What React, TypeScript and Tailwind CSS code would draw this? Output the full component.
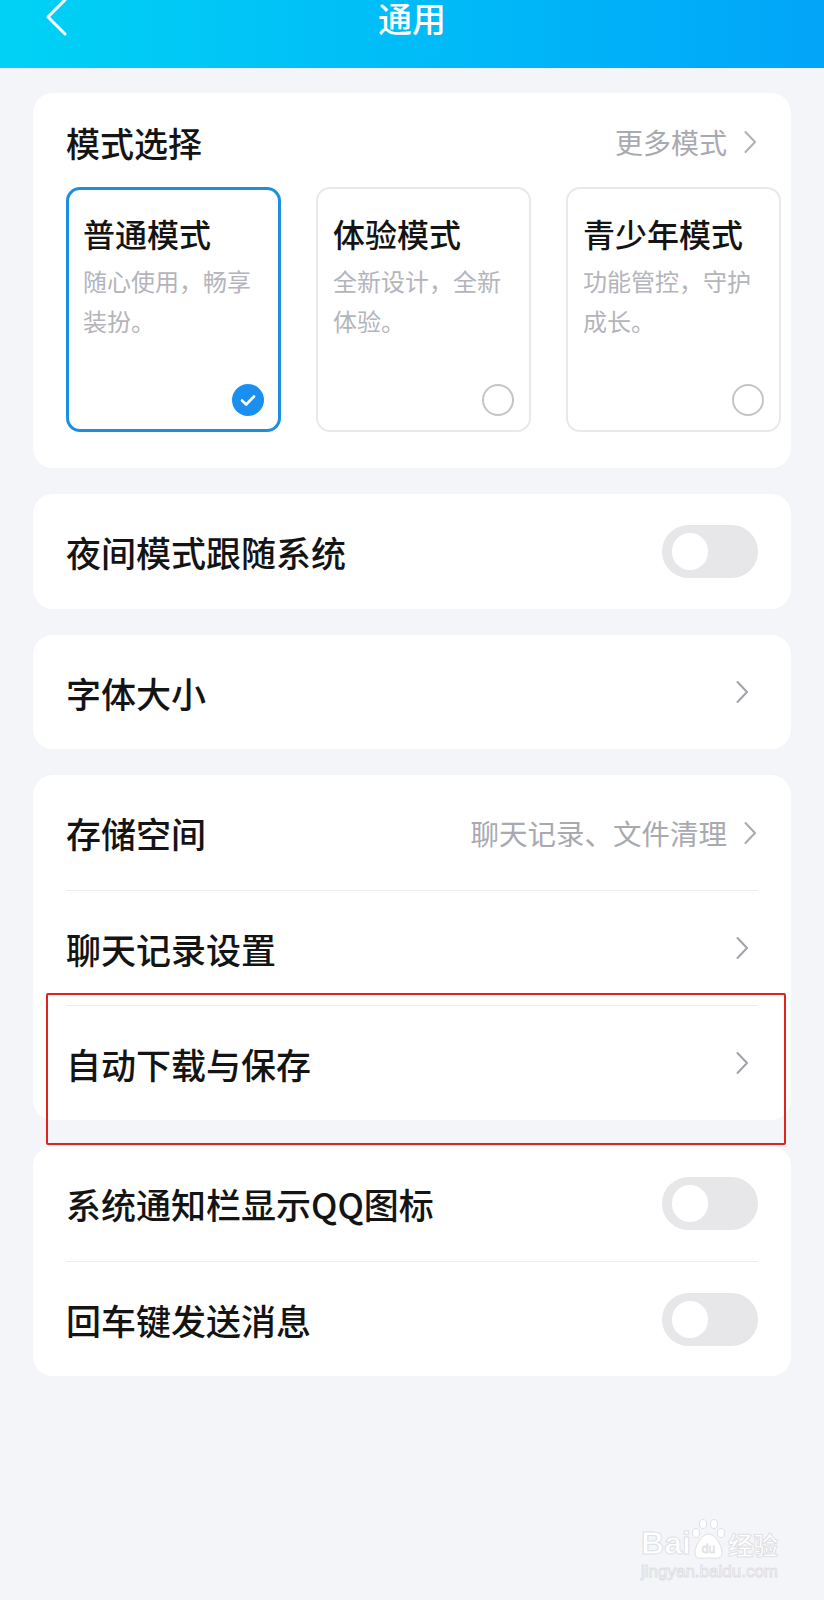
import React from "react";

const Chevron = ({ className = "" }: { className?: string }) => (
  <svg width="14" height="24" viewBox="0 0 14 24" className={className} fill="none">
    <path d="M2.5 2 L12 12 L2.5 22" stroke="currentColor" strokeWidth="2" strokeLinecap="round" strokeLinejoin="round" />
  </svg>
);

const Toggle = () => (
  <div className="w-[96px] h-[53px] rounded-full bg-[#e7e7e9] flex items-center pl-[10px] shrink-0">
    <div className="w-[36px] h-[37px] rounded-full bg-white" />
  </div>
);

const Label = ({ children }: { children: React.ReactNode }) => (
  <span className="text-[35px] leading-[40px] font-medium text-[#141414] pt-[1px]">{children}</span>
);

const Divider = () => <div className="h-px bg-[#ececee] mx-[33px]" />;

type Mode = { title: string; desc: string; selected?: boolean };

const modes: Mode[] = [
  { title: "普通模式", desc: "随心使用，畅享装扮。", selected: true },
  { title: "体验模式", desc: "全新设计，全新体验。" },
  { title: "青少年模式", desc: "功能管控，守护成长。" },
];

const ModeCard = ({ m }: { m: Mode }) => (
  <div
    className={
      m.selected
        ? "w-[215px] h-[245px] shrink-0 rounded-[14px] border-[3px] border-[#1d8fe0] flex flex-col pl-[14px] pr-[14px] pt-[24px] pb-[13px]"
        : "w-[215px] h-[245px] shrink-0 rounded-[14px] border-2 border-[#e9e9eb] flex flex-col pl-[15px] pr-[15px] pt-[25px] pb-[14px]"
    }
  >
    <div className="text-[32px] leading-[38px] font-medium text-[#141414] whitespace-nowrap">{m.title}</div>
    <div className="mt-[9px] text-[24px] leading-[40px] text-[#b4b4bb]">{m.desc}</div>
    {m.selected ? (
      <div className="mt-auto self-end w-[32px] h-[32px] rounded-full bg-[#1b8ff0] flex items-center justify-center">
        <svg width="32" height="32" viewBox="0 0 32 32" fill="none">
          <path d="M10 16.5 L14.2 20.5 L22 12.5" stroke="white" strokeWidth="2.6" strokeLinecap="round" strokeLinejoin="round" />
        </svg>
      </div>
    ) : (
      <div className="mt-auto self-end w-[32px] h-[32px] rounded-full border-2 border-[#c4c4c8]" />
    )}
  </div>
);

export default function App() {
  return (
    <div className="w-full min-h-[1600px] bg-[#f4f5f9] flex flex-col font-['Noto_Sans_CJK_SC','Noto_Sans',sans-serif]">
      {/* Header */}
      <div className="h-[68px] bg-linear-to-r from-[#00d2f5] to-[#03a5f9] grid grid-cols-[1fr_auto_1fr] items-start">
        <div className="pl-[45px]">
          <svg width="24" height="36" viewBox="0 0 24 36" fill="none">
            <path d="M20 0 L3 17 L20 34" stroke="white" strokeWidth="3" strokeLinecap="round" strokeLinejoin="round" />
          </svg>
        </div>
        <div className="text-[34px] leading-[36px] font-medium text-white">通用</div>
        <div />
      </div>

      <div className="px-[33px] pt-[25px] flex flex-col gap-[26px]">
        {/* Mode selection */}
        <div className="bg-white rounded-[20px] pt-[28px] pb-[36px] px-[33px] overflow-hidden">
          <div className="h-[44px] flex items-center justify-between">
            <span className="text-[34px] leading-[44px] font-medium text-[#141414]">模式选择</span>
            <div className="flex items-center gap-[16px] text-[#a9a9b0] -mt-[2px]">
              <span className="text-[28px] leading-[34px]">更多模式</span>
              <Chevron className="text-[#b0b0b6] mr-[1px]" />
            </div>
          </div>
          <div className="mt-[22px] flex gap-[35px]">
            {modes.map((m) => (
              <ModeCard key={m.title} m={m} />
            ))}
          </div>
        </div>

        {/* Night mode */}
        <div className="bg-white rounded-[20px] h-[115px] px-[33px] flex items-center justify-between">
          <Label>夜间模式跟随系统</Label>
          <Toggle />
        </div>

        {/* Font size */}
        <div className="bg-white rounded-[20px] h-[114px] px-[33px] flex items-center justify-between">
          <Label>字体大小</Label>
          <Chevron className="text-[#a2a2a8] mr-[9px]" />
        </div>

        {/* Storage group */}
        <div className="bg-white rounded-[20px] flex flex-col">
          <div className="h-[115px] px-[33px] flex items-center justify-between">
            <Label>存储空间</Label>
            <div className="flex items-center gap-[16px]">
              <span className="text-[28.5px] leading-[34px] text-[#a9a9b0]">聊天记录、文件清理</span>
              <Chevron className="text-[#a9a9b0] mr-[1px]" />
            </div>
          </div>
          <Divider />
          <div className="h-[114px] px-[33px] flex items-center justify-between">
            <Label>聊天记录设置</Label>
            <Chevron className="text-[#a2a2a8] mr-[9px]" />
          </div>
          <Divider />
          <div className="relative h-[114px] px-[33px] flex items-center justify-between">
            <Label>自动下载与保存</Label>
            <Chevron className="text-[#a2a2a8] mr-[9px]" />
            <div className="absolute top-[-13px] left-[13px] right-[5px] bottom-[-25px] border-2 border-[#e0231f] rounded-[2px] z-10 pointer-events-none" />
          </div>
        </div>

        {/* Notification group */}
        <div className="bg-white rounded-[20px] flex flex-col">
          <div className="h-[115px] px-[33px] flex items-center justify-between">
            <Label>系统通知栏显示QQ图标</Label>
            <Toggle />
          </div>
          <Divider />
          <div className="h-[114px] px-[33px] flex items-center justify-between">
            <Label>回车键发送消息</Label>
            <Toggle />
          </div>
        </div>
      </div>

      {/* Watermark */}
      <div className="mt-auto flex justify-end pr-[46px] pb-[18px]">
        <div className="flex flex-col items-center text-white [-webkit-text-stroke:1px_#dfe0e4]">
          <div className="flex items-end">
            <span className="font-['Liberation_Sans',sans-serif] font-bold text-[32px] leading-[34px]">Bai</span>
            <svg width="36" height="44" viewBox="0 0 36 44" fill="none" className="-mb-[2px]">
              <g fill="white" stroke="#dfe0e4" strokeWidth="1">
                <ellipse cx="12" cy="6" rx="3.5" ry="4.5" />
                <ellipse cx="23" cy="6" rx="3.5" ry="4.5" />
                <ellipse cx="5" cy="15" rx="3.5" ry="4.5" />
                <ellipse cx="30" cy="15" rx="3.5" ry="4.5" />
                <path d="M17.5 16 C10 16 3 30 4 36 C5 42 12 40 17.5 40 C23 40 30 42 31 36 C32 30 25 16 17.5 16 Z" />
              </g>
              <text x="17.5" y="35" textAnchor="middle" fontSize="12" fontFamily="Liberation Sans, sans-serif" fill="white" stroke="#dfe0e4" strokeWidth="0.8">du</text>
            </svg>
            <span className="text-[25px] leading-[32px] font-bold ml-[1px]">经验</span>
          </div>
          <span className="font-['Liberation_Sans',sans-serif] text-[17px] leading-[20px] mt-[2px]">jingyan.baidu.com</span>
        </div>
      </div>
    </div>
  );
}
